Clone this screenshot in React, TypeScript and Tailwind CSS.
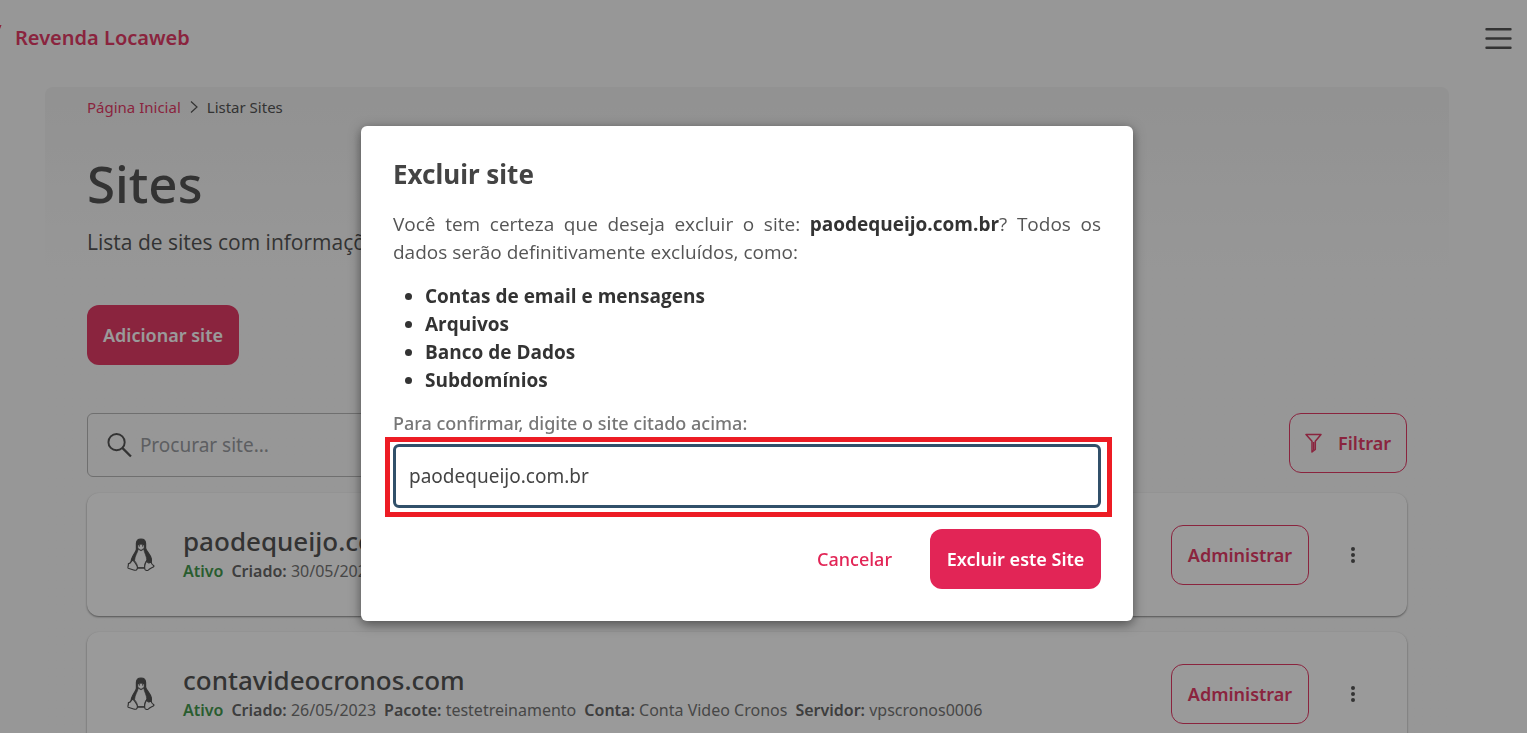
import { useState } from "react";

type Site = {
  domain: string;
  created: string;
  details: { label: string; value: string }[];
};

const sites: Site[] = [
  { domain: "paodequeijo.com.br", created: "30/05/2023", details: [] },
  {
    domain: "contavideocronos.com",
    created: "26/05/2023",
    details: [
      { label: "Pacote:", value: "testetreinamento" },
      { label: "Conta:", value: "Conta Video Cronos" },
      { label: "Servidor:", value: "vpscronos0006" },
    ],
  },
];

const losses = ["Contas de email e mensagens", "Arquivos", "Banco de Dados", "Subdomínios"];

function LinuxIcon() {
  return (
    <svg width="28" height="34" viewBox="0 0 28 34" fill="none" stroke="#414141" strokeWidth="1.2" strokeLinejoin="round" aria-hidden="true">
      <path d="M9.400 9V5.600C9.400 2.800 11.200 1 14 1s4.600 1.800 4.600 4.600V10c.5 3 4.600 6 5.700 10.600.4 1.800.1 3.300-.5 4.400L20 23l-6-10-6.500 10-3.300 1.400c-.6-5.400 4.700-9.600 5.200-13z" fill="#414141" />
      <path d="M10.900 7.200 14 6.200l3.100 1v3L14 12.200l-3.100-2z" fill="#fff" strokeWidth="0.5" />
      <path d="M12 7.800h1M15 7.800h1" strokeWidth="1.200" />
      <path d="M11.300 11.200c-.5 3.100-3.500 6.800-3.700 11.300 1.800 1.700 3 4.900 2.800 7h7.200c-.4-2.700.5-5.300 2.200-7.200-.2-4.300-2.600-7.800-3.100-11.100L14 12.900z" fill="#fff" strokeWidth="0.600" />
      <path d="M5.300 22.400c1.500-.5 4.700 4.700 5.100 6.700.3 2-1 3.500-3 3.100L1.200 30.300c-.9-.4.4-2 .2-4.700 2.500.2 2.700-2.700 3.900-3.200z" fill="#fff" />
      <path d="M20 22.300c-.7 2.200 2.600 3.800 3.900 1 .3 2.400 1.400 3.800 3 4.600.9.800-4.200 2.300-5.400 3.900-1.200 1.200-3.400.8-3.700-.8-.5-2.500.9-6.800 2.200-8.700z" fill="#fff" />
      <path d="M10.300 30h7.500" strokeWidth="1.500" />
    </svg>
  );
}

function SiteCard({ site }: { site: Site }) {
  return (
    <li className="flex h-[123px] items-center rounded-xl bg-white pr-[38px] pl-10 shadow-[0_1px_2px_rgba(0,0,0,0.5)]">
      <LinuxIcon />
      <div className="ml-7 flex-1">
        <h2 className="text-[26px] leading-8 font-medium text-[#414141]">{site.domain}</h2>
        <p className="flex gap-2 text-base leading-7 text-[#666]">
          <strong className="font-semibold text-[#2f8f3a]">Ativo</strong>
          <span>
            <strong className="font-semibold text-[#555]">Criado:</strong> {site.created}
          </span>
          {site.details.map((d) => (
            <span key={d.label}>
              <strong className="font-semibold text-[#555]">{d.label}</strong> {d.value}
            </span>
          ))}
        </p>
      </div>
      <button type="button" className="h-[60px] w-[138px] rounded-xl border border-[#e22556] text-lg font-semibold text-[#e22556]">
        Administrar
      </button>
      <button type="button" aria-label="Mais opções" className="ml-7 flex h-10 w-8 items-center justify-center">
        <svg width="6" height="18" viewBox="0 0 6 18" fill="#414141" aria-hidden="true">
          <circle cx="3" cy="3" r="2" />
          <circle cx="3" cy="9" r="2" />
          <circle cx="3" cy="15" r="2" />
        </svg>
      </button>
    </li>
  );
}

function DeleteDialog() {
  const [value, setValue] = useState("paodequeijo.com.br");

  return (
    <div className="fixed inset-0 flex items-start justify-center bg-[#222222]/46 pt-[126px] pr-[33px]">
      <div
        role="dialog"
        aria-modal="true"
        aria-labelledby="dialog-title"
        className="w-full max-w-[772px] rounded-md bg-white p-8 shadow-[0_3px_12px_rgba(0,0,0,0.5)]"
      >
        <h2 id="dialog-title" className="text-[26px] leading-8 font-bold text-[#444]">
          Excluir site
        </h2>
        <p className="mt-5 text-justify font-['Open_Sans',sans-serif] text-[19px] leading-7 text-[#555]">
          Você tem certeza que deseja excluir o site: <strong className="text-[#333]">paodequeijo.com.br</strong>? Todos
          os dados serão definitivamente excluídos, como:
        </p>
        <ul className="mt-4 list-disc pl-8 font-['Open_Sans',sans-serif] text-[19px] leading-7 font-bold text-[#333]">
          {losses.map((item) => (
            <li key={item}>{item}</li>
          ))}
        </ul>
        <label htmlFor="confirm-site" className="mt-4 block text-lg leading-[27px] font-medium text-[#777]">
          Para confirmar, digite o site citado acima:
        </label>
        <div className="-mr-[11px] -ml-2 border-5 border-[#ed1c24] pt-[2px] pr-[6px] pb-1 pl-[3px]">
          <input
            id="confirm-site"
            type="text"
            value={value}
            onChange={(e) => setValue(e.target.value)}
            className="block h-16 w-full rounded-md border-3 border-[#31506a] bg-white px-[13px] text-[19px] text-[#444] outline-none"
          />
        </div>
        <div className="mt-3 flex justify-end gap-5">
          <button type="button" className="px-[18px] text-lg font-medium text-[#e22556]">
            Cancelar
          </button>
          <button type="button" className="h-[60px] w-[171px] rounded-xl bg-[#e22556] text-lg font-semibold text-white">
            Excluir este Site
          </button>
        </div>
      </div>
    </div>
  );
}

export default function App() {
  return (
    <div className="h-screen overflow-hidden bg-[#f9f9f9] font-['Noto_Sans',sans-serif] text-[#414141]">
      <header className="flex h-[87px] items-start justify-between pt-6 pr-[15px]">
        <a href="#inicio" className="flex items-start text-xl leading-7 font-semibold text-[#e22556]">
          <svg width="15" height="8" viewBox="0 0 15 8" aria-hidden="true">
            <path d="M0 1h1.500L0 5z" fill="#e22556" />
          </svg>
          Revenda Locaweb
        </a>
        <button type="button" aria-label="Menu" className="py-[3px]">
          <svg width="27" height="23" viewBox="0 0 27 23" stroke="#414141" strokeWidth="2.4" strokeLinecap="round" aria-hidden="true">
            <path d="M1.500 2.200h24M1.500 11.500h24M1.500 20.800h24" />
          </svg>
        </button>
      </header>

      <main className="mr-[78px] ml-[45px] rounded-lg bg-linear-to-b from-[#f0f0f0] to-[#f9f9f9] to-[180px] px-[42px]">
        <nav aria-label="Breadcrumb" className="flex items-center gap-2 pt-[10px] text-[15px] leading-5">
          <a href="#inicio" className="text-[#e22556]">
            Página Inicial
          </a>
          <svg width="10" height="14" viewBox="0 0 10 14" fill="none" stroke="#414141" strokeWidth="1.200" aria-hidden="true">
            <path d="M2 1.500 8 7l-6 5.500" />
          </svg>
          <span>Listar Sites</span>
        </nav>
        <h1 className="mt-[34px] text-[51px] leading-[64px] font-medium">Sites</h1>
        <p className="mt-[13px] font-['Open_Sans',sans-serif] text-[21px] leading-7">Lista de sites com informações</p>

        <button type="button" className="mt-[49px] block h-[60px] w-[152px] rounded-xl bg-[#e22556] text-lg font-semibold text-white">
          Adicionar site
        </button>

        <div className="mt-12 flex items-start justify-between">
          <div className="flex h-16 w-full max-w-[800px] items-center gap-2 rounded-md border border-[#b0b0b0] px-[19px]">
            <svg width="26" height="26" viewBox="0 0 26 26" fill="none" stroke="#414141" strokeWidth="2" aria-hidden="true">
              <circle cx="10" cy="10" r="8.500" />
              <path d="m16 16 9 9" strokeWidth="2.400" />
            </svg>
            <input
              type="search"
              aria-label="Procurar site"
              placeholder="Procurar site..."
              className="w-full bg-transparent text-[19px] outline-none placeholder:text-[#8e9196]"
            />
          </div>
          <button
            type="button"
            className="flex h-[60px] items-center gap-4 rounded-xl border border-[#e22556] px-[15px] text-lg font-semibold text-[#e22556]"
          >
            <svg width="17" height="20" viewBox="0 0 17 20" fill="none" stroke="currentColor" strokeWidth="1.500" strokeLinejoin="round" aria-hidden="true">
              <path d="M1 1.500h15l-5.700 6.800v8.200L7 19V8.300z" />
              <path d="M8.700 9v8" />
            </svg>
            Filtrar
          </button>
        </div>

        <ul className="mt-4 flex flex-col gap-4">
          {sites.map((site) => (
            <SiteCard key={site.domain} site={site} />
          ))}
        </ul>
      </main>

      <DeleteDialog />
    </div>
  );
}
